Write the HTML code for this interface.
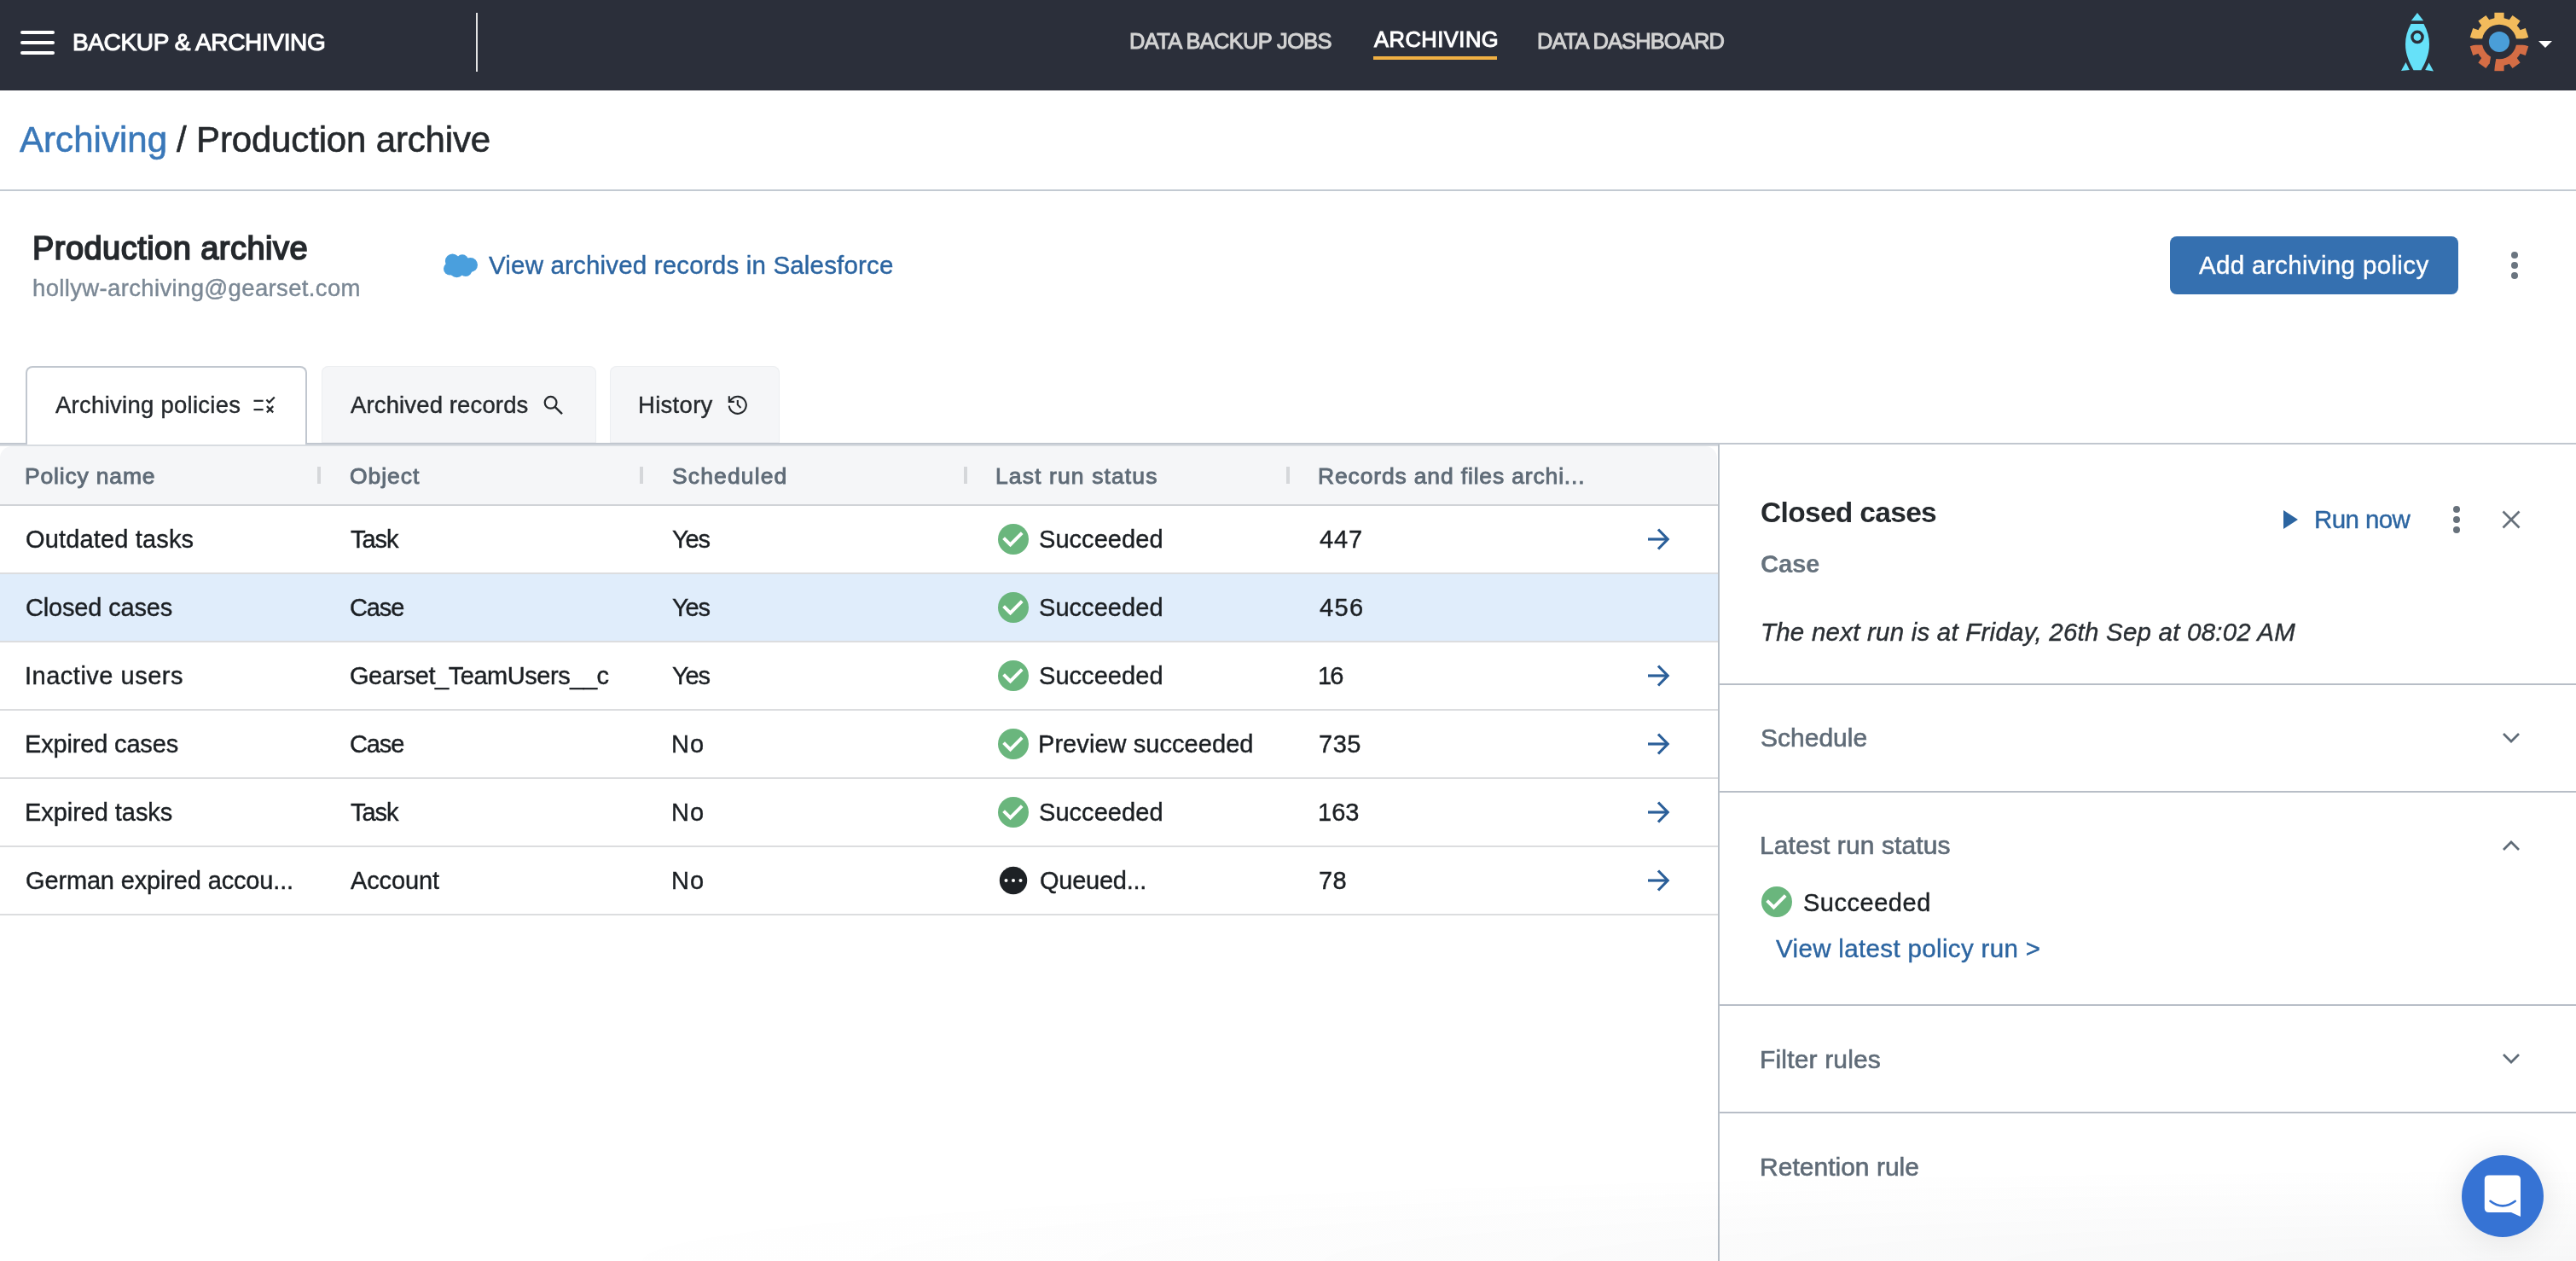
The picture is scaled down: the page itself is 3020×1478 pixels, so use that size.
<!DOCTYPE html>
<html><head><meta charset="utf-8"><title>Production archive</title>
<style>
html,body{margin:0;padding:0}
body{width:3020px;height:1478px;position:relative;overflow:hidden;background:#fff;font-family:"Liberation Sans",sans-serif}
.t{position:absolute;white-space:nowrap;line-height:1;will-change:transform}
.b{position:absolute;box-sizing:border-box}
svg.b{overflow:visible}
</style></head><body>
<div class="b" style="left:0px;top:0px;width:3020px;height:106px;background:#2b2f3a;"></div>
<div class="b" style="left:24px;top:36px;width:40px;height:4px;background:#ffffff;border-radius:2px"></div>
<div class="b" style="left:24px;top:48px;width:40px;height:4px;background:#ffffff;border-radius:2px"></div>
<div class="b" style="left:24px;top:60px;width:40px;height:4px;background:#ffffff;border-radius:2px"></div>
<div class="b" style="left:558px;top:15px;width:2px;height:69px;background:#e4e4e4;"></div>
<div class="b" style="left:1610px;top:66px;width:145px;height:4px;background:#f0b043;"></div>
<svg class="b" style="left:2810px;top:10px" width="50" height="80" viewBox="2810 10 50 80">
<g fill="#66e1f9">
<polygon points="2834,15 2826.8,24.2 2841.2,24.2"/>
<path d="M2826.5,28 L2841.5,28 C2846,36 2848,44 2848,52 C2848,64 2843,74 2838.5,82.3 L2829.5,82.3 C2825,74 2820,64 2820,52 C2820,44 2822,36 2826.5,28 Z"/>
<polygon points="2815,83 2820.5,73 2824.8,82"/>
<polygon points="2853,83.5 2847.6,73.5 2843.2,82"/>
</g>
<circle cx="2834" cy="43.4" r="6.1" fill="none" stroke="#2b2f3a" stroke-width="3.4"/>
</svg>
<svg class="b" style="left:2892px;top:11px" width="76" height="76" viewBox="-38 -38 76 76">
<defs>
<mask id="gm"><rect x="-40" y="-40" width="80" height="80" fill="#fff"/>
<circle r="20.2" fill="#000"/><rect x="-40" y="-3.6" width="80" height="7.3" fill="#000"/>
<polygon points="-9.8,17 -3.2,17 -6.7,37 -13.3,37" fill="#000"/>
</mask>
<clipPath id="gtop"><rect x="-40" y="-40" width="80" height="40"/></clipPath>
<clipPath id="gbot"><rect x="-40" y="0" width="80" height="40"/></clipPath>
</defs>
<g mask="url(#gm)">
<g clip-path="url(#gtop)" fill="#f2bb5c"><circle r="28.3"/><rect x="-5.6" y="-34.2" width="11.2" height="9" transform="rotate(0)"/><rect x="-5.6" y="-34.2" width="11.2" height="9" transform="rotate(36)"/><rect x="-5.6" y="-34.2" width="11.2" height="9" transform="rotate(72)"/><rect x="-5.6" y="-34.2" width="11.2" height="9" transform="rotate(108)"/><rect x="-5.6" y="-34.2" width="11.2" height="9" transform="rotate(144)"/><rect x="-5.6" y="-34.2" width="11.2" height="9" transform="rotate(180)"/><rect x="-5.6" y="-34.2" width="11.2" height="9" transform="rotate(216)"/><rect x="-5.6" y="-34.2" width="11.2" height="9" transform="rotate(252)"/><rect x="-5.6" y="-34.2" width="11.2" height="9" transform="rotate(288)"/><rect x="-5.6" y="-34.2" width="11.2" height="9" transform="rotate(324)"/></g>
<g clip-path="url(#gbot)" fill="#d46d45"><circle r="28.3"/><rect x="-5.6" y="-34.2" width="11.2" height="9" transform="rotate(0)"/><rect x="-5.6" y="-34.2" width="11.2" height="9" transform="rotate(36)"/><rect x="-5.6" y="-34.2" width="11.2" height="9" transform="rotate(72)"/><rect x="-5.6" y="-34.2" width="11.2" height="9" transform="rotate(108)"/><rect x="-5.6" y="-34.2" width="11.2" height="9" transform="rotate(144)"/><rect x="-5.6" y="-34.2" width="11.2" height="9" transform="rotate(180)"/><rect x="-5.6" y="-34.2" width="11.2" height="9" transform="rotate(216)"/><rect x="-5.6" y="-34.2" width="11.2" height="9" transform="rotate(252)"/><rect x="-5.6" y="-34.2" width="11.2" height="9" transform="rotate(288)"/><rect x="-5.6" y="-34.2" width="11.2" height="9" transform="rotate(324)"/></g>
</g>
<circle r="12.1" fill="#4a9ed8"/>
</svg>
<svg class="b" style="left:2974px;top:46px" width="20" height="12" viewBox="0 0 20 12"><polygon points="2,2 18,2 10,10" fill="#fff"/></svg>
<div class="t" style="left:85.10px;top:36.10px;font-size:28px;font-weight:400;font-style:normal;letter-spacing:-0.365px;color:#ffffff;-webkit-text-stroke:1.1px #ffffff">BACKUP &amp; ARCHIVING</div>
<div class="t" style="left:1323.70px;top:36.00px;font-size:25.5px;font-weight:400;font-style:normal;letter-spacing:-0.693px;color:#d3d3d3;-webkit-text-stroke:1.0px #d3d3d3">DATA BACKUP JOBS</div>
<div class="t" style="left:1610.60px;top:34.00px;font-size:25.5px;font-weight:400;font-style:normal;letter-spacing:0.500px;color:#ffffff;-webkit-text-stroke:1.0px #ffffff">ARCHIVING</div>
<div class="t" style="left:1802.20px;top:36.00px;font-size:25.5px;font-weight:400;font-style:normal;letter-spacing:-0.892px;color:#d3d3d3;-webkit-text-stroke:1.0px #d3d3d3">DATA DASHBOARD</div>
<div class="t" style="left:22.80px;top:143.00px;font-size:42px;font-weight:400;font-style:normal;letter-spacing:0.049px;color:#3a78b9;-webkit-text-stroke:0.6px #3a78b9">Archiving</div>
<div class="t" style="left:207.00px;top:143.00px;font-size:42px;font-weight:400;font-style:normal;letter-spacing:-0.158px;color:#25292d;-webkit-text-stroke:0.6px #25292d">/ Production archive</div>
<div class="b" style="left:0px;top:222px;width:3020px;height:2px;background:#c3cad2;"></div>
<div class="t" style="left:37.90px;top:271.80px;font-size:38px;font-weight:400;font-style:normal;letter-spacing:0.459px;color:#25292d;-webkit-text-stroke:1.7px #25292d">Production archive</div>
<div class="t" style="left:37.90px;top:323.70px;font-size:27.5px;font-weight:400;font-style:normal;letter-spacing:0.356px;color:#7b8895;-webkit-text-stroke:0.4px #7b8895">hollyw-archiving@gearset.com</div>
<svg class="b" style="left:518px;top:295px" width="44" height="32" viewBox="518 295 44 32"><g fill="#4a9fdd">
<circle cx="530.5" cy="306" r="8.6"/><circle cx="542" cy="305.5" r="7.2"/><circle cx="551.5" cy="310.5" r="8.5"/>
<circle cx="527.5" cy="315" r="7.5"/><circle cx="535.5" cy="316.2" r="9"/><circle cx="546" cy="316.5" r="7.5"/>
<rect x="528" y="303" width="24" height="16"/></g></svg>
<div class="t" style="left:573.00px;top:295.60px;font-size:29.5px;font-weight:400;font-style:normal;letter-spacing:0.176px;color:#2c65a1;-webkit-text-stroke:0.4px #2c65a1">View archived records in Salesforce</div>
<div class="b" style="left:2544px;top:277px;width:338px;height:68px;background:#3570b0;border-radius:8px"></div>
<div class="t" style="left:2578.00px;top:295.90px;font-size:29.5px;font-weight:400;font-style:normal;letter-spacing:0.357px;color:#ffffff;-webkit-text-stroke:0.4px #ffffff">Add archiving policy</div>
<div class="b" style="left:2944px;top:295px;width:8px;height:8px;background:#6b7580;border-radius:50%"></div>
<div class="b" style="left:2944px;top:307px;width:8px;height:8px;background:#6b7580;border-radius:50%"></div>
<div class="b" style="left:2944px;top:319px;width:8px;height:8px;background:#6b7580;border-radius:50%"></div>
<div class="b" style="left:0px;top:519px;width:3020px;height:2px;background:#c1c7cf;"></div>
<div class="b" style="left:376.6px;top:429px;width:322px;height:90px;background:#f5f6f8;border-radius:8px 8px 0 0;box-shadow:inset 0 0 0 1px #eceef1"></div>
<div class="b" style="left:715px;top:429px;width:199px;height:90px;background:#f5f6f8;border-radius:8px 8px 0 0;box-shadow:inset 0 0 0 1px #eceef1"></div>
<div class="b" style="left:30px;top:429px;width:330px;height:92px;background:#fff;border:2px solid #c1c7cf;border-bottom:none;border-radius:8px 8px 0 0"></div>
<div class="t" style="left:64.70px;top:461.00px;font-size:27.5px;font-weight:400;font-style:normal;letter-spacing:0.271px;color:#25292d;-webkit-text-stroke:0.4px #25292d">Archiving policies</div>
<div class="t" style="left:411.30px;top:461.20px;font-size:27.5px;font-weight:400;font-style:normal;letter-spacing:0.133px;color:#25292d;-webkit-text-stroke:0.4px #25292d">Archived records</div>
<div class="t" style="left:747.90px;top:461.20px;font-size:27.5px;font-weight:400;font-style:normal;letter-spacing:0.300px;color:#25292d;-webkit-text-stroke:0.4px #25292d">History</div>
<svg class="b" style="left:290px;top:455px" width="40" height="40" viewBox="290 455 40 40" fill="none" stroke="#25292d" stroke-width="2.2">
<line x1="297.5" y1="469.8" x2="308.6" y2="469.8"/><line x1="297.5" y1="480.1" x2="308.6" y2="480.1"/>
<polyline points="312.4,468.4 315.6,471.8 321.8,465.4"/>
<line x1="312.9" y1="476.1" x2="320.2" y2="483.4"/><line x1="320.2" y1="476.1" x2="312.9" y2="483.4"/>
</svg>
<svg class="b" style="left:630px;top:455px" width="40" height="40" viewBox="630 455 40 40" fill="none" stroke="#25292d" stroke-width="2.2">
<circle cx="645.6" cy="471.8" r="6.9"/><line x1="650.6" y1="476.8" x2="659" y2="485.2" stroke-width="2.4"/>
</svg>
<svg class="b" style="left:845px;top:455px" width="40" height="40" viewBox="845 455 40 40" fill="none" stroke="#25292d" stroke-width="2.1">
<path d="M854.8,475.6 A10,10 0 1 0 857.6,467.8 L855.2,470.5"/>
<polyline points="854.8,464.2 854.8,470.9 860.9,470.9"/>
<polyline points="864.8,469 864.8,474.4 868.5,477.9"/>
</svg>
<div class="b" style="left:0px;top:521px;width:2014px;height:2px;background:#d8dce1;"></div>
<div class="b" style="left:0px;top:523px;width:2013px;height:68px;background:#f5f6f8;border-radius:14px 14px 0 0"></div>
<div class="b" style="left:0px;top:591px;width:2014px;height:2px;background:#d0d3d7;"></div>
<div class="b" style="left:372px;top:547px;width:4px;height:20px;background:#d5d7da;"></div>
<div class="b" style="left:750px;top:547px;width:4px;height:20px;background:#d5d7da;"></div>
<div class="b" style="left:1130px;top:547px;width:4px;height:20px;background:#d5d7da;"></div>
<div class="b" style="left:1508px;top:547px;width:4px;height:20px;background:#d5d7da;"></div>
<div class="t" style="left:29.40px;top:544.60px;font-size:26.5px;font-weight:400;font-style:normal;letter-spacing:0.820px;color:#5f6b77;-webkit-text-stroke:0.9px #5f6b77">Policy name</div>
<div class="t" style="left:410.30px;top:544.60px;font-size:26.5px;font-weight:400;font-style:normal;letter-spacing:0.960px;color:#5f6b77;-webkit-text-stroke:0.9px #5f6b77">Object</div>
<div class="t" style="left:788.00px;top:544.60px;font-size:26.5px;font-weight:400;font-style:normal;letter-spacing:1.125px;color:#5f6b77;-webkit-text-stroke:0.9px #5f6b77">Scheduled</div>
<div class="t" style="left:1167.30px;top:544.60px;font-size:26.5px;font-weight:400;font-style:normal;letter-spacing:1.114px;color:#5f6b77;-webkit-text-stroke:0.9px #5f6b77">Last run status</div>
<div class="t" style="left:1545.00px;top:544.60px;font-size:26.5px;font-weight:400;font-style:normal;letter-spacing:0.840px;color:#5f6b77;-webkit-text-stroke:0.9px #5f6b77">Records and files archi...</div>
<div class="b" style="left:0px;top:673px;width:2014px;height:78px;background:#e0edfb;"></div>
<div class="b" style="left:0px;top:671px;width:2014px;height:2px;background:#dcdddf;"></div>
<div class="b" style="left:0px;top:751px;width:2014px;height:2px;background:#dcdddf;"></div>
<div class="b" style="left:0px;top:831px;width:2014px;height:2px;background:#dcdddf;"></div>
<div class="b" style="left:0px;top:911px;width:2014px;height:2px;background:#dcdddf;"></div>
<div class="b" style="left:0px;top:991px;width:2014px;height:2px;background:#dcdddf;"></div>
<div class="b" style="left:0px;top:1071px;width:2014px;height:2px;background:#dcdddf;"></div>
<svg class="b" style="left:1170px;top:614px" width="36" height="36" viewBox="0 0 36 36"><circle cx="18" cy="18" r="18" fill="#6ab67d"/><polyline points="6.6,16.6 14.5,24.4 28.2,10.6" fill="none" stroke="#fff" stroke-width="3.9"/></svg>
<svg class="b" style="left:1928px;top:616px" width="32" height="32" viewBox="0 0 32 32" fill="none" stroke="#2b5f99" stroke-width="3.2"><line x1="4" y1="16" x2="26.5" y2="16"/><polyline points="16,4.5 27.2,16 16,27.5"/></svg>
<div class="t" style="left:30.20px;top:618.00px;font-size:29px;font-weight:400;font-style:normal;letter-spacing:0.154px;color:#1b1f23;-webkit-text-stroke:0.4px #1b1f23">Outdated tasks</div>
<div class="t" style="left:411.40px;top:618.00px;font-size:29px;font-weight:400;font-style:normal;letter-spacing:-1.067px;color:#1b1f23;-webkit-text-stroke:0.4px #1b1f23">Task</div>
<div class="t" style="left:788.00px;top:618.00px;font-size:29px;font-weight:400;font-style:normal;letter-spacing:-1.100px;color:#1b1f23;-webkit-text-stroke:0.4px #1b1f23">Yes</div>
<div class="t" style="left:1217.90px;top:618.00px;font-size:29px;font-weight:400;font-style:normal;letter-spacing:0.049px;color:#1b1f23;-webkit-text-stroke:0.4px #1b1f23">Succeeded</div>
<div class="t" style="left:1547.00px;top:618.00px;font-size:29px;font-weight:400;font-style:normal;letter-spacing:0.900px;color:#1b1f23;-webkit-text-stroke:0.4px #1b1f23">447</div>
<svg class="b" style="left:1170px;top:694px" width="36" height="36" viewBox="0 0 36 36"><circle cx="18" cy="18" r="18" fill="#6ab67d"/><polyline points="6.6,16.6 14.5,24.4 28.2,10.6" fill="none" stroke="#fff" stroke-width="3.9"/></svg>
<div class="t" style="left:30.00px;top:698.00px;font-size:29px;font-weight:400;font-style:normal;letter-spacing:-0.163px;color:#1b1f23;-webkit-text-stroke:0.4px #1b1f23">Closed cases</div>
<div class="t" style="left:410.40px;top:698.00px;font-size:29px;font-weight:400;font-style:normal;letter-spacing:-1.134px;color:#1b1f23;-webkit-text-stroke:0.4px #1b1f23">Case</div>
<div class="t" style="left:788.00px;top:698.00px;font-size:29px;font-weight:400;font-style:normal;letter-spacing:-1.100px;color:#1b1f23;-webkit-text-stroke:0.4px #1b1f23">Yes</div>
<div class="t" style="left:1217.90px;top:698.00px;font-size:29px;font-weight:400;font-style:normal;letter-spacing:0.049px;color:#1b1f23;-webkit-text-stroke:0.4px #1b1f23">Succeeded</div>
<div class="t" style="left:1547.00px;top:698.00px;font-size:29px;font-weight:400;font-style:normal;letter-spacing:1.400px;color:#1b1f23;-webkit-text-stroke:0.4px #1b1f23">456</div>
<svg class="b" style="left:1170px;top:774px" width="36" height="36" viewBox="0 0 36 36"><circle cx="18" cy="18" r="18" fill="#6ab67d"/><polyline points="6.6,16.6 14.5,24.4 28.2,10.6" fill="none" stroke="#fff" stroke-width="3.9"/></svg>
<svg class="b" style="left:1928px;top:776px" width="32" height="32" viewBox="0 0 32 32" fill="none" stroke="#2b5f99" stroke-width="3.2"><line x1="4" y1="16" x2="26.5" y2="16"/><polyline points="16,4.5 27.2,16 16,27.5"/></svg>
<div class="t" style="left:29.00px;top:778.00px;font-size:29px;font-weight:400;font-style:normal;letter-spacing:0.508px;color:#1b1f23;-webkit-text-stroke:0.4px #1b1f23">Inactive users</div>
<div class="t" style="left:410.00px;top:778.00px;font-size:29px;font-weight:400;font-style:normal;letter-spacing:-0.453px;color:#1b1f23;-webkit-text-stroke:0.4px #1b1f23">Gearset_TeamUsers__c</div>
<div class="t" style="left:788.00px;top:778.00px;font-size:29px;font-weight:400;font-style:normal;letter-spacing:-1.100px;color:#1b1f23;-webkit-text-stroke:0.4px #1b1f23">Yes</div>
<div class="t" style="left:1217.90px;top:778.00px;font-size:29px;font-weight:400;font-style:normal;letter-spacing:0.049px;color:#1b1f23;-webkit-text-stroke:0.4px #1b1f23">Succeeded</div>
<div class="t" style="left:1545.00px;top:778.00px;font-size:29px;font-weight:400;font-style:normal;letter-spacing:-2.000px;color:#1b1f23;-webkit-text-stroke:0.4px #1b1f23">16</div>
<svg class="b" style="left:1170px;top:854px" width="36" height="36" viewBox="0 0 36 36"><circle cx="18" cy="18" r="18" fill="#6ab67d"/><polyline points="6.6,16.6 14.5,24.4 28.2,10.6" fill="none" stroke="#fff" stroke-width="3.9"/></svg>
<svg class="b" style="left:1928px;top:856px" width="32" height="32" viewBox="0 0 32 32" fill="none" stroke="#2b5f99" stroke-width="3.2"><line x1="4" y1="16" x2="26.5" y2="16"/><polyline points="16,4.5 27.2,16 16,27.5"/></svg>
<div class="t" style="left:29.00px;top:858.00px;font-size:29px;font-weight:400;font-style:normal;letter-spacing:-0.166px;color:#1b1f23;-webkit-text-stroke:0.4px #1b1f23">Expired cases</div>
<div class="t" style="left:410.40px;top:858.00px;font-size:29px;font-weight:400;font-style:normal;letter-spacing:-1.134px;color:#1b1f23;-webkit-text-stroke:0.4px #1b1f23">Case</div>
<div class="t" style="left:787.00px;top:858.00px;font-size:29px;font-weight:400;font-style:normal;letter-spacing:1.000px;color:#1b1f23;-webkit-text-stroke:0.4px #1b1f23">No</div>
<div class="t" style="left:1216.90px;top:858.00px;font-size:29px;font-weight:400;font-style:normal;letter-spacing:0.062px;color:#1b1f23;-webkit-text-stroke:0.4px #1b1f23">Preview succeeded</div>
<div class="t" style="left:1546.00px;top:858.00px;font-size:29px;font-weight:400;font-style:normal;letter-spacing:0.500px;color:#1b1f23;-webkit-text-stroke:0.4px #1b1f23">735</div>
<svg class="b" style="left:1170px;top:934px" width="36" height="36" viewBox="0 0 36 36"><circle cx="18" cy="18" r="18" fill="#6ab67d"/><polyline points="6.6,16.6 14.5,24.4 28.2,10.6" fill="none" stroke="#fff" stroke-width="3.9"/></svg>
<svg class="b" style="left:1928px;top:936px" width="32" height="32" viewBox="0 0 32 32" fill="none" stroke="#2b5f99" stroke-width="3.2"><line x1="4" y1="16" x2="26.5" y2="16"/><polyline points="16,4.5 27.2,16 16,27.5"/></svg>
<div class="t" style="left:29.00px;top:938.00px;font-size:29px;font-weight:400;font-style:normal;letter-spacing:-0.066px;color:#1b1f23;-webkit-text-stroke:0.4px #1b1f23">Expired tasks</div>
<div class="t" style="left:411.40px;top:938.00px;font-size:29px;font-weight:400;font-style:normal;letter-spacing:-1.067px;color:#1b1f23;-webkit-text-stroke:0.4px #1b1f23">Task</div>
<div class="t" style="left:787.00px;top:938.00px;font-size:29px;font-weight:400;font-style:normal;letter-spacing:1.000px;color:#1b1f23;-webkit-text-stroke:0.4px #1b1f23">No</div>
<div class="t" style="left:1217.90px;top:938.00px;font-size:29px;font-weight:400;font-style:normal;letter-spacing:0.049px;color:#1b1f23;-webkit-text-stroke:0.4px #1b1f23">Succeeded</div>
<div class="t" style="left:1545.00px;top:938.00px;font-size:29px;font-weight:400;font-style:normal;letter-spacing:0.000px;color:#1b1f23;-webkit-text-stroke:0.4px #1b1f23">163</div>
<svg class="b" style="left:1170px;top:1014px" width="36" height="36" viewBox="0 0 36 36"><circle cx="18" cy="18" r="16.2" fill="#1d2125"/><circle cx="9.5" cy="18" r="2" fill="#fff"/><circle cx="18" cy="18" r="2" fill="#fff"/><circle cx="26.5" cy="18" r="2" fill="#fff"/></svg>
<svg class="b" style="left:1928px;top:1016px" width="32" height="32" viewBox="0 0 32 32" fill="none" stroke="#2b5f99" stroke-width="3.2"><line x1="4" y1="16" x2="26.5" y2="16"/><polyline points="16,4.5 27.2,16 16,27.5"/></svg>
<div class="t" style="left:30.00px;top:1018.00px;font-size:29px;font-weight:400;font-style:normal;letter-spacing:-0.154px;color:#1b1f23;-webkit-text-stroke:0.4px #1b1f23">German expired accou...</div>
<div class="t" style="left:411.40px;top:1018.00px;font-size:29px;font-weight:400;font-style:normal;letter-spacing:-0.134px;color:#1b1f23;-webkit-text-stroke:0.4px #1b1f23">Account</div>
<div class="t" style="left:787.00px;top:1018.00px;font-size:29px;font-weight:400;font-style:normal;letter-spacing:1.000px;color:#1b1f23;-webkit-text-stroke:0.4px #1b1f23">No</div>
<div class="t" style="left:1218.50px;top:1018.00px;font-size:29px;font-weight:400;font-style:normal;letter-spacing:-0.251px;color:#1b1f23;-webkit-text-stroke:0.4px #1b1f23">Queued...</div>
<div class="t" style="left:1545.70px;top:1018.00px;font-size:29px;font-weight:400;font-style:normal;letter-spacing:0.400px;color:#1b1f23;-webkit-text-stroke:0.4px #1b1f23">78</div>
<div class="b" style="left:2014px;top:521px;width:2px;height:957px;background:#b9c0c8;"></div>
<div class="t" style="left:2063.60px;top:583.90px;font-size:33.5px;font-weight:700;font-style:normal;letter-spacing:-0.673px;color:#25292d">Closed cases</div>
<div class="t" style="left:2063.60px;top:646.10px;font-size:29.5px;font-weight:700;font-style:normal;letter-spacing:-0.333px;color:#66727d">Case</div>
<div class="t" style="left:2063.90px;top:725.90px;font-size:29.5px;font-weight:400;font-style:italic;letter-spacing:0.222px;color:#2a2f34;-webkit-text-stroke:0.4px #2a2f34">The next run is at Friday, 26th Sep at 08:02 AM</div>
<svg class="b" style="left:2672px;top:594px" width="26" height="30" viewBox="2672 594 26 30"><polygon points="2677,598 2694,609 2677,620" fill="#2c65a1"/></svg>
<div class="t" style="left:2713.30px;top:594.10px;font-size:29.5px;font-weight:400;font-style:normal;letter-spacing:-0.600px;color:#2c65a1;-webkit-text-stroke:0.4px #2c65a1">Run now</div>
<div class="b" style="left:2876px;top:593px;width:8px;height:8px;background:#67717b;border-radius:50%"></div>
<div class="b" style="left:2876px;top:605px;width:8px;height:8px;background:#67717b;border-radius:50%"></div>
<div class="b" style="left:2876px;top:617px;width:8px;height:8px;background:#67717b;border-radius:50%"></div>
<svg class="b" style="left:2930px;top:595px" width="28" height="28" viewBox="2930 595 28 28" fill="none" stroke="#67717b" stroke-width="2.6"><line x1="2934.5" y1="599.5" x2="2953.5" y2="618.5"/><line x1="2953.5" y1="599.5" x2="2934.5" y2="618.5"/></svg>
<div class="b" style="left:2016px;top:801px;width:1004px;height:2px;background:#b8bec7;"></div>
<div class="b" style="left:2016px;top:927px;width:1004px;height:2px;background:#b8bec7;"></div>
<div class="b" style="left:2016px;top:1177px;width:1004px;height:2px;background:#b8bec7;"></div>
<div class="b" style="left:2016px;top:1303px;width:1004px;height:2px;background:#b8bec7;"></div>
<div class="t" style="left:2063.60px;top:850.30px;font-size:30px;font-weight:400;font-style:normal;letter-spacing:-0.000px;color:#5f6b77;-webkit-text-stroke:0.6px #5f6b77">Schedule</div>
<div class="t" style="left:2062.60px;top:976.00px;font-size:30px;font-weight:400;font-style:normal;letter-spacing:0.113px;color:#5f6b77;-webkit-text-stroke:0.6px #5f6b77">Latest run status</div>
<div class="t" style="left:2062.60px;top:1227.00px;font-size:30px;font-weight:400;font-style:normal;letter-spacing:0.163px;color:#5f6b77;-webkit-text-stroke:0.6px #5f6b77">Filter rules</div>
<div class="t" style="left:2062.60px;top:1353.00px;font-size:30px;font-weight:400;font-style:normal;letter-spacing:0.016px;color:#5f6b77;-webkit-text-stroke:0.6px #5f6b77">Retention rule</div>
<div class="t" style="left:2113.90px;top:1043.70px;font-size:29px;font-weight:400;font-style:normal;letter-spacing:0.524px;color:#1b1f23;-webkit-text-stroke:0.4px #1b1f23">Succeeded</div>
<div class="t" style="left:2082.00px;top:1096.60px;font-size:29.5px;font-weight:400;font-style:normal;letter-spacing:0.348px;color:#2c65a1;-webkit-text-stroke:0.4px #2c65a1">View latest policy run &gt;</div>
<svg class="b" style="left:2930px;top:857px" width="28" height="20" viewBox="0 0 28 20" fill="none" stroke="#5f6b77" stroke-width="2.7"><polyline points="5,3 14,12 23,3"/></svg>
<svg class="b" style="left:2930px;top:984px" width="28" height="20" viewBox="0 0 28 20" fill="none" stroke="#5f6b77" stroke-width="2.7"><polyline points="5,12 14,3 23,12"/></svg>
<svg class="b" style="left:2930px;top:1233px" width="28" height="20" viewBox="0 0 28 20" fill="none" stroke="#5f6b77" stroke-width="2.7"><polyline points="5,3 14,12 23,3"/></svg>
<svg class="b" style="left:2065px;top:1039px" width="36" height="36" viewBox="0 0 36 36"><circle cx="18" cy="18" r="18" fill="#6ab67d"/><polyline points="6.6,16.6 14.5,24.4 28.2,10.6" fill="none" stroke="#fff" stroke-width="3.9"/></svg>
<div class="b" style="left:620px;top:1368px;width:2400px;height:110px;background:radial-gradient(2400px 110px at 100% 100%, rgba(29,39,54,0.035) 0%, rgba(29,39,54,0) 100%)"></div>
<div class="b" style="left:2886px;top:1354px;width:96px;height:96px;border-radius:50%;background:#3673d4;box-shadow:0 2px 40px rgba(0,0,0,0.10)"></div>
<svg class="b" style="left:2900px;top:1368px" width="68" height="68" viewBox="2900 1368 68 68">
<path d="M2918,1377.6 H2950 Q2955,1377.6 2955,1382.6 V1426 L2944,1421 H2918 Q2912.8,1421 2912.8,1416 V1382.6 Q2912.8,1377.6 2918,1377.6 Z" fill="#fff"/>
<path d="M2919.5,1407.8 Q2934,1419 2948.8,1407.8" fill="none" stroke="#3673d4" stroke-width="2.6" stroke-linecap="round"/>
</svg>
</body></html>
